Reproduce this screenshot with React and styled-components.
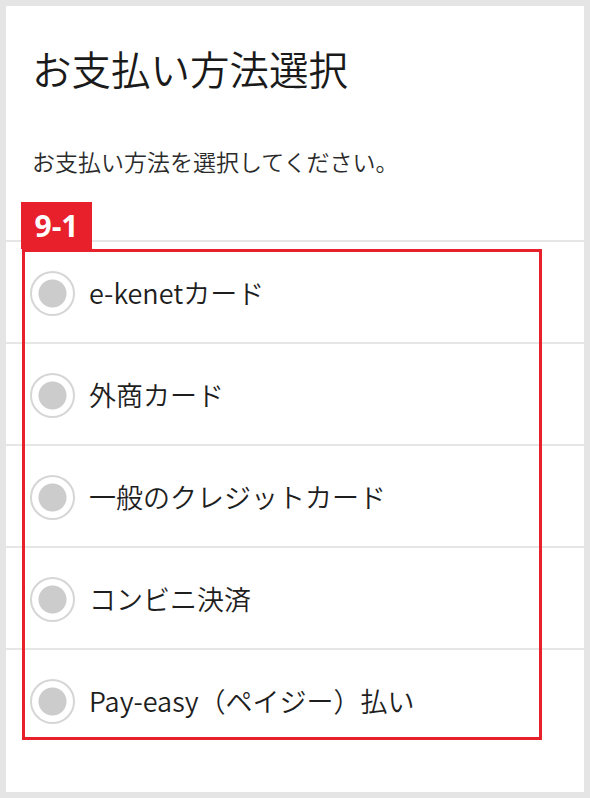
import styled, { createGlobalStyle } from 'styled-components'

const methods = [
  'e-kenetカード',
  '外商カード',
  '一般のクレジットカード',
  'コンビニ決済',
  'Pay-easy（ペイジー）払い',
]

const App = () => {
  return (
    <>
      <GlobalStyle />
      <Frame>
        <Panel>
          <Title>お支払い方法選択</Title>
          <Lead>お支払い方法を選択してください。</Lead>
          <MethodList>
            {methods.map((label) => (
              <MethodRow key={label}>
                <Radio type="radio" name="payment" />
                <MethodLabel>{label}</MethodLabel>
              </MethodRow>
            ))}
            <Highlight />
            <Badge>9-1</Badge>
          </MethodList>
        </Panel>
      </Frame>
    </>
  )
}

// Styles

const GlobalStyle = createGlobalStyle`
  html, body {
    margin: 0;
    padding: 0;
    background: #e5e5e5;
  }

  body {
    font-family: "Noto Sans CJK JP", "Noto Sans", sans-serif;
    font-weight: 350;
    color: #222;
  }
`

const Frame = styled.div`
  padding: 6px;
  width: 590px;
  height: 798px;
  box-sizing: border-box;
`

const Panel = styled.main`
  background: #fff;
  height: 786px;
  padding-top: 38px;
  box-sizing: border-box;
`

const Title = styled.h1`
  margin: 0;
  padding-left: 26px;
  font-size: 39.5px;
  line-height: 48px;
  font-weight: 350;
  color: #1a1a1a;
`

const Lead = styled.p`
  margin: 54px 0 0;
  padding-left: 26px;
  font-size: 23px;
  line-height: 30px;
  color: #2a2a2a;
`

const MethodList = styled.ul`
  position: relative;
  list-style: none;
  margin: 64px 0 0;
  padding: 0;
`

const MethodRow = styled.li`
  display: flex;
  align-items: center;
  gap: 14px;
  height: 102px;
  padding: 2px 0 0 24px;
  box-sizing: border-box;
  border-top: 2px solid #e6e6e6;
`

const Radio = styled.input`
  appearance: none;
  margin: 0;
  width: 45px;
  height: 45px;
  border-radius: 50%;
  border: 2px solid #d6d6d6;
  background: radial-gradient(circle, #cccccc 0 13.5px, #fff 14.5px);
  box-sizing: border-box;
  flex-shrink: 0;
`

const MethodLabel = styled.span`
  font-size: 27px;
  line-height: 1.2;
  color: #1e1e1e;
`

const Highlight = styled.div`
  position: absolute;
  left: 16px;
  top: 9px;
  width: 520px;
  height: 491px;
  border: 3px solid #e8202b;
  box-sizing: border-box;
  pointer-events: none;
`

const Badge = styled.div`
  position: absolute;
  left: 15px;
  top: -38px;
  width: 71px;
  height: 47px;
  background: #e8202b;
  color: #fff;
  font-family: "Open Sans", "Noto Sans", sans-serif;
  font-weight: 700;
  font-size: 30px;
  line-height: 47px;
  text-align: center;
`

export default App
